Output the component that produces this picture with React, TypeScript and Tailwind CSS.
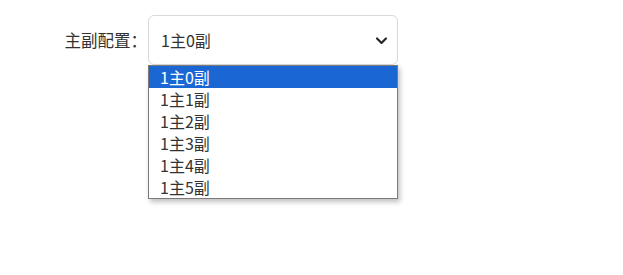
const options = ["1主0副", "1主1副", "1主2副", "1主3副", "1主4副", "1主5副"];

function ChevronDown() {
  return (
    <svg width="13" height="13" viewBox="0 0 16 16" fill="none">
      <path d="M2.5 5.5 8 11l5.5-5.5" stroke="#222" strokeWidth="2.6" strokeLinecap="round" strokeLinejoin="round" />
    </svg>
  );
}

export default function App() {
  const font = { fontFamily: '"Noto Sans CJK SC", "Noto Sans", sans-serif' };
  return (
    <div className="w-[623px] h-[275px] bg-white text-[#333]" style={font}>
      <div className="flex items-start pt-[15px]">
        <label className="w-[148px] h-[50px] flex items-center justify-end pr-[1px] text-[16.5px] leading-none">
          主副配置：
        </label>
        <div className="w-[250px] relative">
          <div className="h-[50px] border border-[#d9d9d9] rounded-[6px] flex items-center justify-between pl-[12px] pr-[9px] text-[16px]">
            <span>1主0副</span>
            <ChevronDown />
          </div>
          <ul className="absolute left-0 top-[50px] w-[250px] border border-[#7a7a7a] bg-white shadow-[2px_3px_5px_rgba(0,0,0,0.25)]">
            {options.map((o, i) => (
              <li
                key={o}
                className={
                  i === 0
                    ? "h-[22px] flex items-center pl-[11px] text-[16px] bg-[#1a67d4] text-white"
                    : "h-[22px] flex items-center pl-[11px] text-[16px] text-[#333]"
                }
              >
                {o}
              </li>
            ))}
          </ul>
        </div>
      </div>
    </div>
  );
}
